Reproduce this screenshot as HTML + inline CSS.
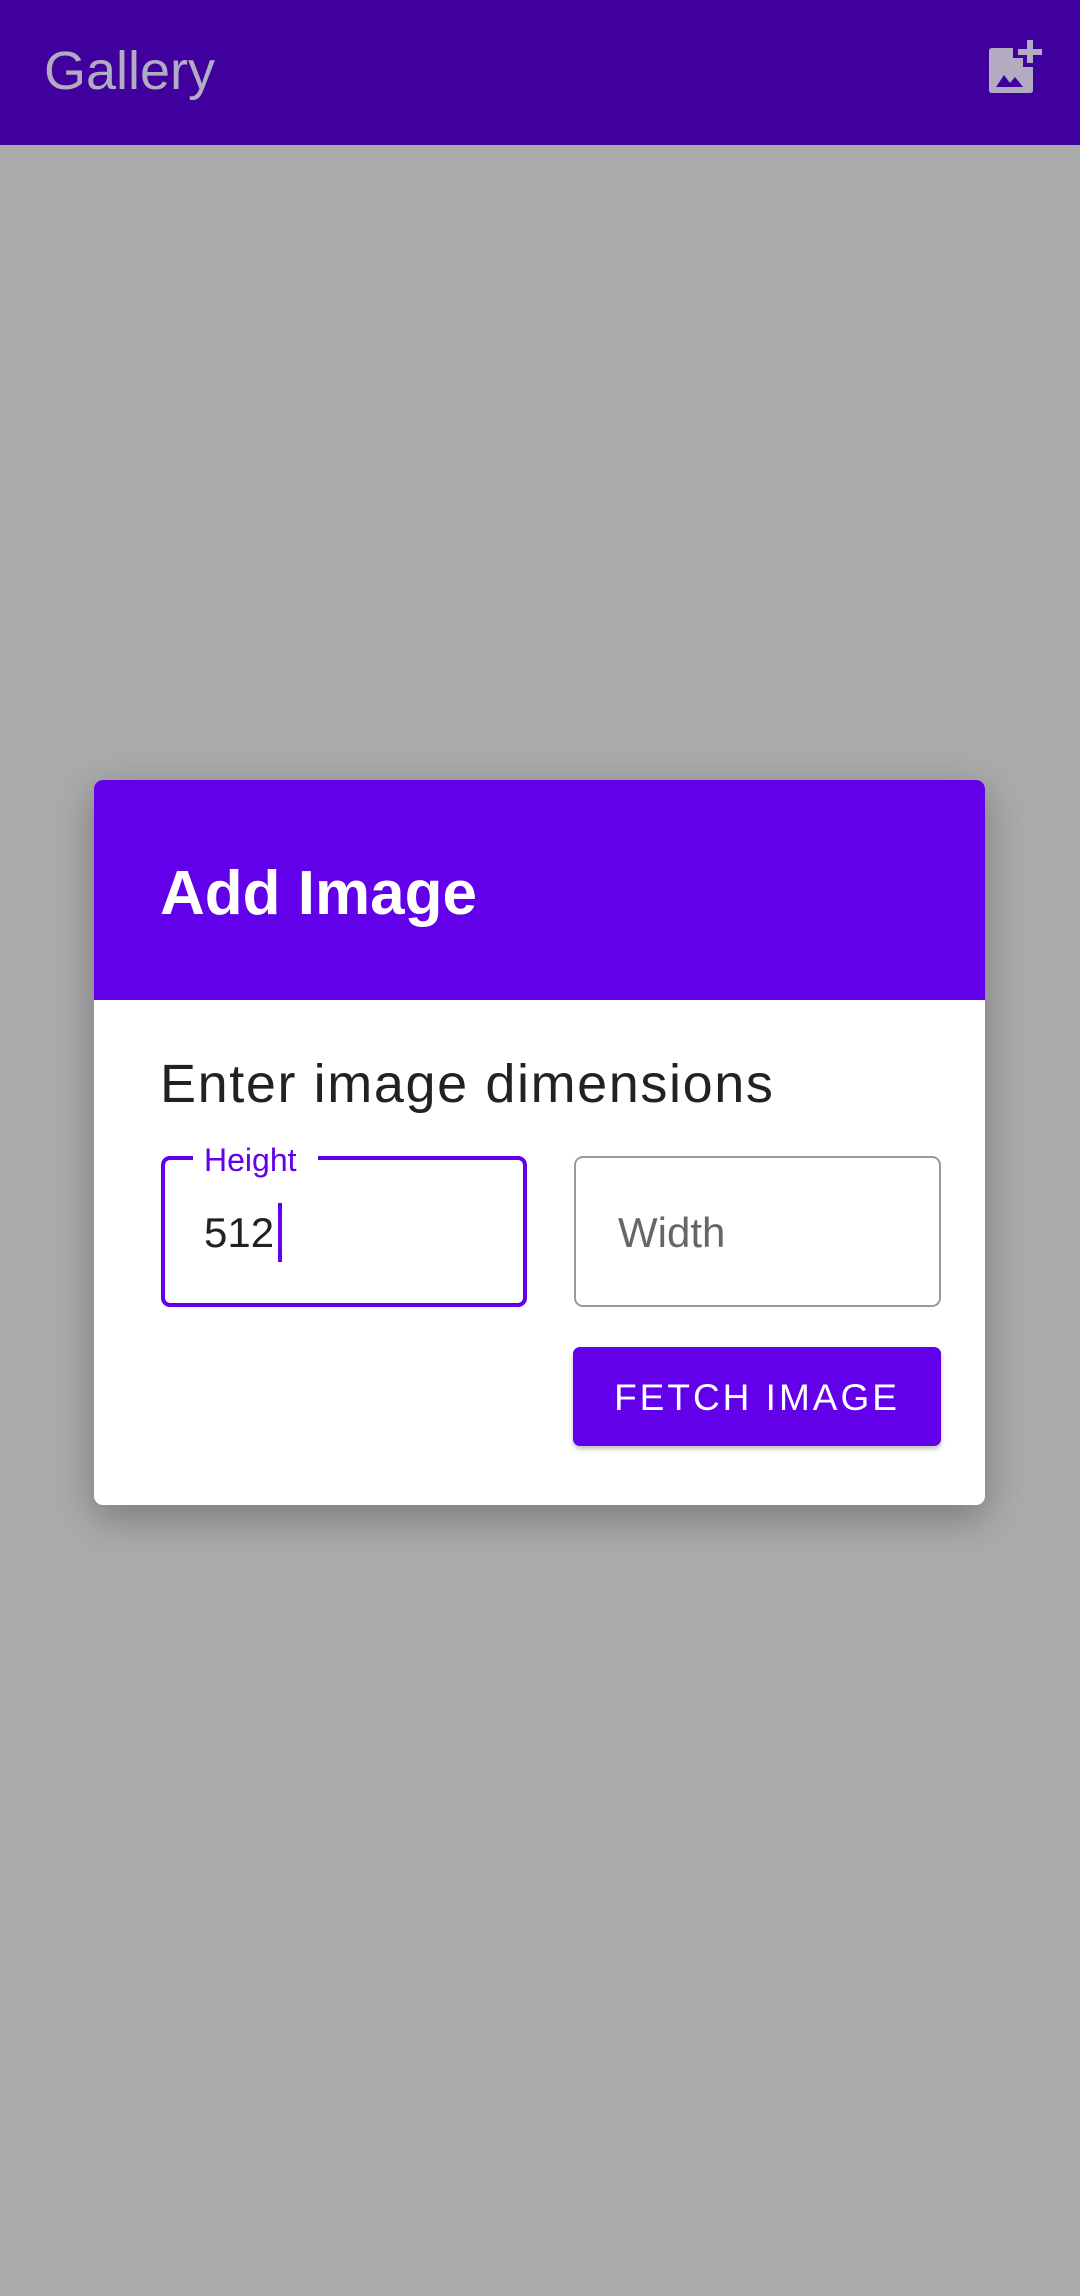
<!DOCTYPE html>
<html><head><meta charset="utf-8"><style>
html,body{margin:0;padding:0}
body{width:1080px;height:2296px;background:#ababab;position:relative;overflow:hidden;font-family:"Liberation Sans",sans-serif}
.a{position:absolute;line-height:1;white-space:nowrap}
</style></head><body>
<div style="position:absolute;left:0;top:0;width:1080px;height:145px;background:#3f009e"></div>
<div class="a" style="left:44px;top:44px;font-size:54px;color:#b3abc2;">Gallery</div>
<svg style="position:absolute;left:985px;top:36px" width="64" height="64" viewBox="985 36 64 64">
<path d="M992 48 H1013 V58 H1023 V67 H1033 V90 Q1033 93 1030 93 H992 Q989 93 989 90 V51 Q989 48 992 48 Z" fill="#b3abc2"/>
<path d="M996 87 L1004 75 L1010 83 L1015 77 L1023 87 Z" fill="#3f009e"/>
<path d="M1030 40 V63 M1018 52 H1042" stroke="#b3abc2" stroke-width="6"/>
</svg>
<div style="position:absolute;left:94px;top:780px;width:891px;height:725px;background:#fff;border-radius:9px;overflow:hidden;box-shadow:0 12px 40px rgba(0,0,0,0.3)">
<div style="height:220px;background:#6200ea"></div>
</div>
<div class="a" style="left:160px;top:863px;font-size:62px;font-weight:bold;color:#fff">Add Image</div>
<div class="a" style="left:160px;top:1057px;font-size:54px;letter-spacing:1.6px;color:#222">Enter image dimensions</div>
<div style="position:absolute;left:161px;top:1156px;width:358px;height:143px;border:4px solid #6200ea;border-radius:9px"></div>
<div class="a" style="left:193px;top:1146px;width:125px;height:26px;background:#fff"></div>
<div class="a" style="left:204px;top:1144px;font-size:32px;color:#6200ea">Height</div>
<div class="a" style="left:204px;top:1212px;font-size:42px;color:#222">512</div>
<div style="position:absolute;left:278px;top:1203px;width:4px;height:59px;background:#6200ea"></div>
<div style="position:absolute;left:574px;top:1156px;width:363px;height:147px;border:2px solid #9a9a9a;border-radius:9px"></div>
<div class="a" style="left:618px;top:1212px;font-size:42px;color:#666">Width</div>
<div style="position:absolute;left:573px;top:1347px;width:368px;height:99px;background:#6200ea;border-radius:7px;box-shadow:0 3px 5px rgba(0,0,0,0.25)"></div>
<div class="a" style="left:573px;top:1379px;width:368px;text-align:center;font-size:37px;letter-spacing:3px;color:#fff">FETCH IMAGE</div>
</body></html>
